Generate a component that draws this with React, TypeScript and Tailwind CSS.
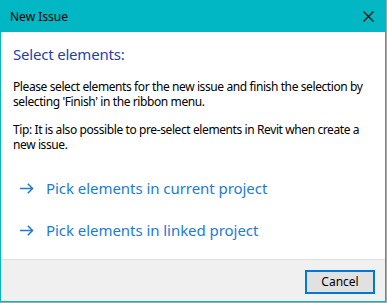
import React from "react";

const font = { fontFamily: '"Segoe UI", "Noto Sans", sans-serif' };

const ArrowIcon = () => (
  <svg width="14" height="11" viewBox="0 0 14 11" className="shrink-0" fill="none" stroke="currentColor" strokeWidth="1.5">
    <path d="M0 5.5h12.5" />
    <path d="M7.8 0.8l4.7 4.7-4.7 4.7" />
  </svg>
);

const PickLink = ({ label }: { label: string }) => (
  <button className="flex items-center gap-[12px] pl-[7px] text-[15px] tracking-[-0.05px] text-[#1c7bd6] leading-[22px] hover:underline">
    <ArrowIcon />
    <span>{label}</span>
  </button>
);

export default function App() {
  return (
    <div className="w-[387px] h-[303px] border-r border-b border-[#a6a6a6]" style={font}>
      <div className="flex flex-col h-full border border-[#00b7c3]">
        {/* title bar */}
        <div className="flex items-center justify-between h-[31px] bg-[#00b7c3] pl-[9px] pr-[11px] text-[12px] text-black">
          <span>New Issue</span>
          <svg width="11" height="11" viewBox="0 0 11 11" stroke="#111" strokeWidth="1.1">
            <path d="M0.5 0.5l10 10M10.5 0.5l-10 10" />
          </svg>
        </div>

        {/* body */}
        <div className="flex-1 bg-white pl-[12px] pr-[12px] pt-[11px]">
          <h1 className="text-[15px] tracking-[-0.2px] leading-[22px] text-[#1f3fb0]">Select elements:</h1>
          <p className="mt-[14px] text-[12px] tracking-[-0.4px] leading-[15px] text-black">
            Please select elements for the new issue and finish the selection by selecting 'Finish' in the ribbon menu.
          </p>
          <p className="mt-[13px] text-[12px] tracking-[-0.4px] leading-[15px] text-black">
            Tip: It is also possible to pre-select elements in Revit when create a new issue.
          </p>
          <div className="mt-[25px] flex flex-col gap-[20px] items-start">
            <PickLink label="Pick elements in current project" />
            <PickLink label="Pick elements in linked project" />
          </div>
        </div>

        {/* footer */}
        <div className="h-[42px] border-t border-[#dfdfdf] bg-[#f0f0f0] flex justify-end pt-[10px] pr-[10px]">
          <button className="w-[70px] h-[24px] border-2 border-[#0078d7] bg-[#e1e1e1] text-[12px] text-black leading-none">
            Cancel
          </button>
        </div>
      </div>
    </div>
  );
}
